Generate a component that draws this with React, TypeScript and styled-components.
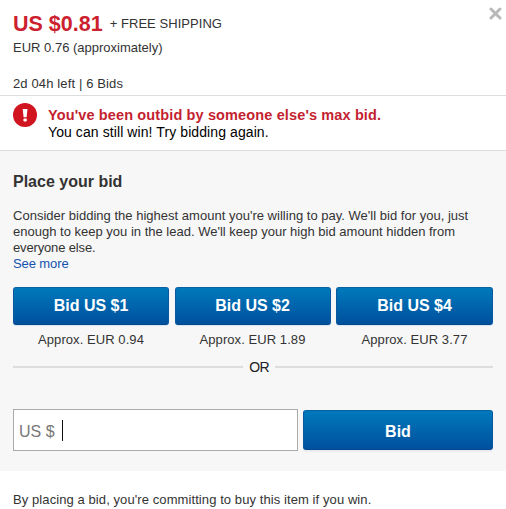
import React from "react";
import styled, { createGlobalStyle } from "styled-components";

const GlobalStyle = createGlobalStyle`
  * { box-sizing: border-box; }
  body {
    margin: 0;
    background: #fff;
    color: #333;
    font: 13px/16px "Liberation Sans", Arial, sans-serif;
    overflow: hidden;
  }
`;

const Dialog = styled.main`
  position: relative;
  width: 506px;
  height: 509px;
  overflow: hidden;
`;

const Line = styled.div<{ $spacing?: number }>`
  white-space: nowrap;
  letter-spacing: ${(p) => p.$spacing ?? 0}px;
`;

const Header = styled.header`
  height: 95px;
  padding: 12px 13px 0;
`;

const PriceRow = styled.div`
  display: flex;
  gap: 7px;
  height: 28px;
  line-height: 24px;
`;

const Price = styled.strong`
  color: #cc1f2f;
  font-size: 21.5px;
`;

const TimeLeft = styled(Line)`
  margin-top: 20px;
`;

const CloseButton = styled.button`
  position: absolute;
  top: 7px;
  right: 4px;
  width: 13px;
  height: 13px;
  padding: 0;
  border: 0;
  background: none;
  svg { display: block; }
`;

const Alert = styled.section`
  display: flex;
  gap: 11px;
  height: 56px;
  padding: 7px 13px 0;
  border: solid #ddd;
  border-width: 1px 0;
`;

const AlertText = styled.div`
  padding-top: 4px;
  color: #000;
  font-size: 14px;
  line-height: 17px;
`;

const AlertTitle = styled(Line)`
  color: #c41f30;
  font-weight: bold;
  font-size: 14.5px;
`;

const Panel = styled.section`
  height: 320px;
  padding: 21px 13px 0;
  background: #f7f7f7;
`;

const Heading = styled.h2`
  margin: 0 0 16px;
  font-size: 16px;
  line-height: 20px;
`;

const Link = styled.a`
  color: #1552ae;
`;

const Options = styled.div`
  display: grid;
  grid-template-columns: 156px 156px 157px;
  justify-content: space-between;
  margin-top: 15px;
`;

const Option = styled.div`
  text-align: center;
`;

const BidButton = styled.button<{ $height: number }>`
  display: block;
  width: 100%;
  height: ${(p) => p.$height}px;
  padding: 0;
  border: 1px solid;
  border-color: #07629f #0a58a0 #00468c;
  border-radius: 3px;
  background: linear-gradient(#0079bc, #00509d);
  box-shadow: 0 1px 1px #d5e7ef;
  color: #fff;
  font: bold 16px/36px "Liberation Sans", Arial, sans-serif;
`;

const SubmitButton = styled(BidButton)`
  padding-top: 3px;
  box-shadow: 0 2px 1px #ececf0;
`;

const Approx = styled(Line)`
  margin-top: 7px;
`;

const Divider = styled.div`
  display: grid;
  grid-template-columns: 230px 1fr 218px;
  align-items: center;
  height: 20px;
  margin-top: 9px;
  color: #222;
  font-size: 14px;
  letter-spacing: -0.8px;
  text-align: center;
  &::before, &::after {
    content: "";
    height: 2px;
    background: #ddd;
  }
`;

const BidForm = styled.div`
  display: flex;
  align-items: center;
  justify-content: space-between;
  margin-top: 32px;
`;

const Field = styled.div`
  display: flex;
  align-items: center;
  width: 285px;
  height: 42px;
  padding: 4px 5px 0;
  border: 1px solid #aaa;
  background: #fff;
  color: #777;
  font-size: 16px;
`;

const Caret = styled.span`
  width: 1px;
  height: 21px;
  margin: 0 0 4px 7px;
  background: #111;
`;

const Submit = styled.div`
  width: 190px;
`;

const Footer = styled.footer`
  padding: 21px 13px 0;
`;

const OPTIONS = [
  { bid: "Bid US $1", approx: "Approx. EUR 0.94" },
  { bid: "Bid US $2", approx: "Approx. EUR 1.89" },
  { bid: "Bid US $4", approx: "Approx. EUR 3.77" },
];

export default function App() {
  return (
    <>
      <GlobalStyle />
      <Dialog>
        <Header>
          <PriceRow>
            <Price>US $0.81</Price>
            <Line $spacing={0.05}>+ FREE SHIPPING</Line>
          </PriceRow>
          <Line>EUR 0.76 (approximately)</Line>
          <TimeLeft $spacing={0.13}>2d 04h left | 6 Bids</TimeLeft>
          <CloseButton aria-label="Close">
            <svg width="13" height="13" viewBox="0 0 13 13">
              <path d="M2 2L11 11M11 2L2 11" stroke="#b9b9b9" strokeWidth="3" strokeLinecap="round" />
            </svg>
          </CloseButton>
        </Header>
        <Alert>
          <svg width="24" height="24" viewBox="0 0 24 24">
            <circle cx="12" cy="12" r="12" fill="#d01520" />
            <path d="M9.7 6h4.8l-.9 8.2h-3z" fill="#fff" />
            <rect x="10.4" y="15.4" width="3.4" height="3.2" rx="1" fill="#fff" />
          </svg>
          <AlertText>
            <AlertTitle $spacing={0.13}>You've been outbid by someone else's max bid.</AlertTitle>
            <Line $spacing={0.09}>You can still win! Try bidding again.</Line>
          </AlertText>
        </Alert>
        <Panel>
          <Heading>Place your bid</Heading>
          <Line $spacing={0.015}>Consider bidding the highest amount you're willing to pay. We'll bid for you, just</Line>
          <Line $spacing={0.005}>enough to keep you in the lead. We'll keep your high bid amount hidden from</Line>
          <Line $spacing={-0.15}>everyone else.</Line>
          <Line $spacing={-0.1}><Link>See more</Link></Line>
          <Options>
            {OPTIONS.map((o) => (
              <Option key={o.bid}>
                <BidButton $height={38}>{o.bid}</BidButton>
                <Approx $spacing={0.07}>{o.approx}</Approx>
              </Option>
            ))}
          </Options>
          <Divider>OR</Divider>
          <BidForm>
            <Field>US $<Caret /></Field>
            <Submit><SubmitButton $height={40}>Bid</SubmitButton></Submit>
          </BidForm>
        </Panel>
        <Footer>
          <Line $spacing={0.085}>By placing a bid, you're committing to buy this item if you win.</Line>
        </Footer>
      </Dialog>
    </>
  );
}
